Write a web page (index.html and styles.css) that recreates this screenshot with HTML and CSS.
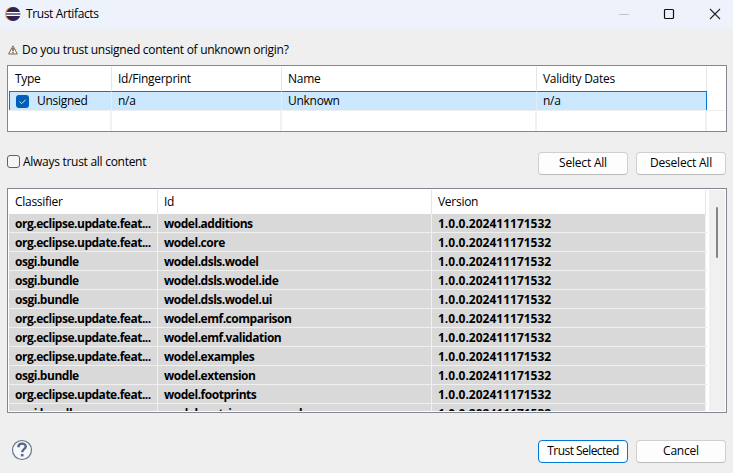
FILE: index.html
```html
<!DOCTYPE html>
<html lang="en">
<head>
<meta charset="utf-8">
<title>Trust Artifacts</title>
<link rel="stylesheet" href="styles.css">
</head>
<body>
<div class="window">
  <header class="titlebar">
    <svg class="logo" width="16" height="16" viewBox="0 0 16 16"><circle cx="7" cy="8" r="7" fill="#f7941e"/><circle cx="8.3" cy="8" r="7" fill="#2c2255"/><path d="M1.5 6.5h13.6M1.3 9.3h14" stroke="#fff" stroke-width="1.2"/><path d="M1.3 7.9h14" stroke="#8b86ad" stroke-width="1.4"/></svg>
    <h1 class="title">Trust Artifacts</h1>
    <svg class="controls" width="104" height="14" viewBox="0 0 104 14" fill="none"><path d="M1 7.5h10" stroke="#c0c3c8"/><rect x="46.5" y="2.5" width="9" height="9" rx="1" stroke="#111" stroke-width="1.2"/><path d="M92 2l10 10M102 2L92 12" stroke="#222" stroke-width="1.1"/></svg>
  </header>
  <main class="content">
    <div class="question">
      <svg width="10" height="10" viewBox="0 0 10 10"><path d="M5 .8L9.4 9H.6z" fill="#fff4dc" stroke="#76665c" stroke-width="1"/><path d="M5 3v3.3M5 7v1.2" stroke="#423b3b" stroke-width="1.2"/></svg>
      <span>Do you trust unsigned content of unknown origin?</span>
    </div>
    <div class="table origins">
      <div class="row head"><span>Type</span><span>Id/Fingerprint</span><span>Name</span><span>Validity Dates</span></div>
      <div class="row selected">
        <span><svg class="check" width="13" height="13" viewBox="0 0 13 13"><rect width="13" height="13" rx="3" fill="#005fb8"/><path d="M3.5 6.5l2.2 2.2 4-4" fill="none" stroke="#d8e8f6"/></svg>Unsigned</span><span>n/a</span><span>Unknown</span><span>n/a</span>
      </div>
      <div class="row blank"><span></span><span></span><span></span><span></span></div>
    </div>
    <div class="options">
      <span class="box"></span><span class="always">Always trust all content</span>
      <button class="button">Select All</button><button class="button">Deselect All</button>
    </div>
    <div class="table artifacts">
      <div class="list">
        <div class="row head"><span>Classifier</span><span>Id</span><span>Version</span></div>
        <div class="row item"><span>org.eclipse.update.feat...</span><span>wodel.additions</span><span>1.0.0.202411171532</span></div>
        <div class="row item"><span>org.eclipse.update.feat...</span><span>wodel.core</span><span>1.0.0.202411171532</span></div>
        <div class="row item"><span>osgi.bundle</span><span>wodel.dsls.wodel</span><span>1.0.0.202411171532</span></div>
        <div class="row item"><span>osgi.bundle</span><span>wodel.dsls.wodel.ide</span><span>1.0.0.202411171532</span></div>
        <div class="row item"><span>osgi.bundle</span><span>wodel.dsls.wodel.ui</span><span>1.0.0.202411171532</span></div>
        <div class="row item"><span>org.eclipse.update.feat...</span><span>wodel.emf.comparison</span><span>1.0.0.202411171532</span></div>
        <div class="row item"><span>org.eclipse.update.feat...</span><span>wodel.emf.validation</span><span>1.0.0.202411171532</span></div>
        <div class="row item"><span>org.eclipse.update.feat...</span><span>wodel.examples</span><span>1.0.0.202411171532</span></div>
        <div class="row item"><span>osgi.bundle</span><span>wodel.extension</span><span>1.0.0.202411171532</span></div>
        <div class="row item"><span>org.eclipse.update.feat...</span><span>wodel.footprints</span><span>1.0.0.202411171532</span></div>
        <div class="row item"><span>osgi.bundle</span><span>wodel.metrics.command</span><span>1.0.0.202411171532</span></div>
      </div>
      <div class="scrollbar"><div class="thumb"></div></div>
    </div>
    <footer class="actions">
      <svg class="help" width="22" height="22" viewBox="0 0 22 22" fill="none"><circle cx="11" cy="11" r="9.5" fill="#f6f7f9" stroke="#66758f" stroke-width="1.2"/><path d="M7.4 8.2c0-4.7 7.4-4.5 7.4-.6 0 2.6-3.6 2.6-3.6 5.6" stroke="#52658a" stroke-width="2.4"/><path d="M11.2 15v2.4" stroke="#52658a" stroke-width="2.6"/></svg>
      <button class="button primary">Trust Selected</button><button class="button">Cancel</button>
    </footer>
  </main>
</div>
</body>
</html>
```
FILE: styles.css
```css
* { box-sizing: border-box; }
body { margin: 0; font: 12px/18px "Open Sans", "Noto Sans", sans-serif; color: #000; background: #efefef; overflow: hidden; letter-spacing: -0.28px; }
.window { width: 733px; height: 473px; }
.titlebar { height: 29px; background: #eef3fb; display: flex; align-items: center; padding: 0 11px 2px 5px; }
.title { font-size: 12px; font-weight: 400; margin: 0 auto 0 5px; letter-spacing: -0.38px; }
.content { padding: 11px 6px 0 7px; }
.question { height: 20px; display: flex; align-items: center; gap: 4px; padding-left: 1px; }
.table { width: 720px; border: 1px solid #828790; background: #fff; overflow: hidden; }
.row { display: grid; }
.row span { white-space: nowrap; overflow: hidden; border-right: 1px solid #e5e5e5; }
.origins { height: 67px; margin-top: 5px; padding: 1px; }
.origins .row { grid-template-columns: 103px 170px 255px 170px; }
.origins span { padding-left: 6px; }
.origins .head { height: 24px; line-height: 24px; }
.selected { height: 20px; line-height: 18px; border-bottom: 1px solid #eee; }
.selected span { background: #cce8ff; border-top: 1px solid #0078d4; border-right-color: #e5edf3; }
.selected span:first-child { border-left: 1px solid #0078d4; display: flex; align-items: center; }
.selected span:last-child { border-right-color: #0078d4; }
.check { margin-right: 8px; }
.blank { height: 20px; }
.blank span { border-right: 2px solid #eef1f5; }
.options { margin-top: 19px; height: 24px; display: flex; align-items: center; padding-right: 1px; }
.box { width: 13px; height: 13px; border: 1px solid #626262; border-radius: 3px; background: #f5f5f5; margin-bottom: 3px; }
.always { margin: 0 auto 3px 3px; }
.button { width: 90px; height: 23px; padding: 0; margin-left: 8px; border: 1px solid #d0d0d0; border-bottom-color: #bcbcbc; border-radius: 4px; background: #fdfdfd; font: inherit; letter-spacing: -0.2px; color: #000; }
.primary { border-color: #0078d4; letter-spacing: -0.55px; }
.artifacts { height: 225px; margin-top: 13px; padding: 1px; display: flex; justify-content: space-between; }
.list { height: 221px; width: 699px; overflow: hidden; }
.artifacts .row { grid-template-columns: 149px 274px 274px; }
.artifacts .head { height: 24px; line-height: 24px; }
.artifacts .head span { padding-left: 6px; }
.item { height: 19px; font-weight: 700; line-height: 20px; letter-spacing: -0.48px; border-bottom: 1px solid #f0f0f0; }
.item span { background: #d9d9d9; padding-left: 6px; border-right-color: #f0f0f0; }
.item span:last-child { letter-spacing: 0; }
.scrollbar { width: 16px; background: #f0f0f0; padding: 17px 0 0 7px; }
.thumb { width: 2px; height: 51px; background: #858585; border-radius: 1px; }
.actions { display: flex; align-items: center; margin-top: 26px; height: 24px; padding-right: 1px; }
.help { margin: 0 auto 2px 4px; }
```
